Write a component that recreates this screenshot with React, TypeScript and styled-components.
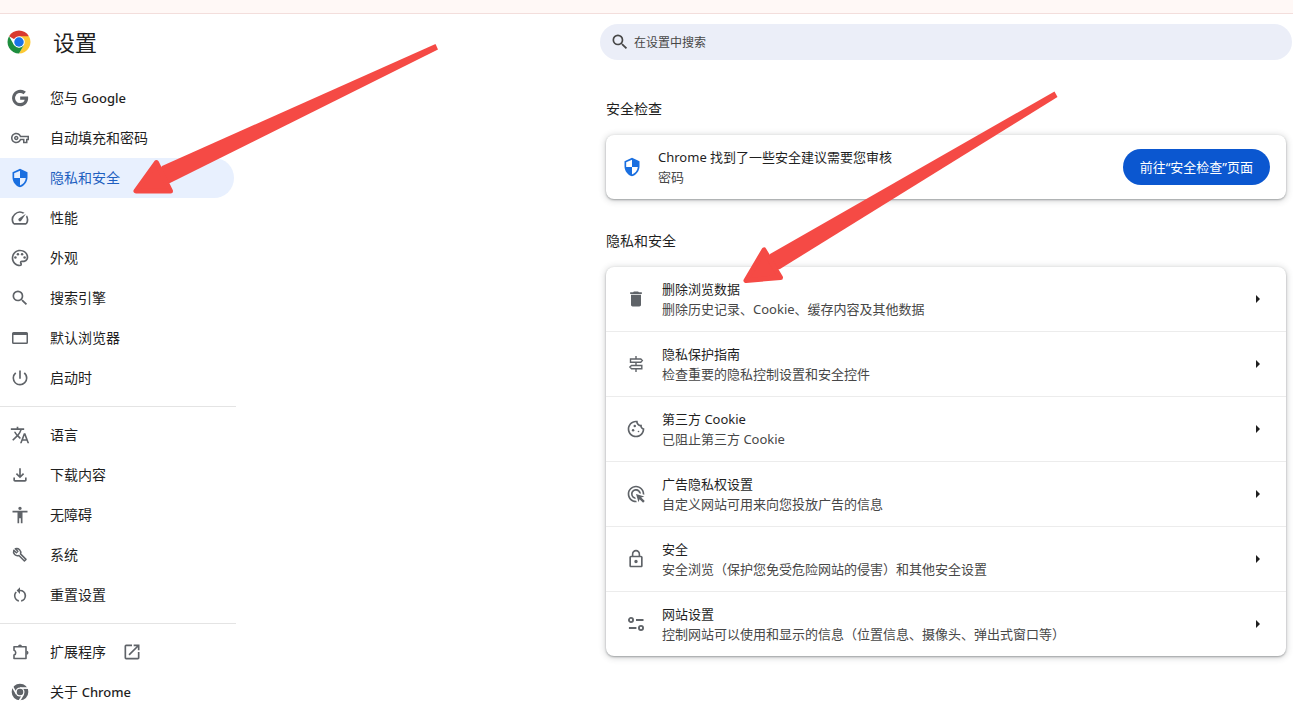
import React from "react";
import styled, { createGlobalStyle } from "styled-components";
import {
  MdOutlineVpnKey,
  MdOutlineSpeed,
  MdOutlinePalette,
  MdSearch,
  MdPowerSettingsNew,
  MdTranslate,
  MdOutlineFileDownload,
  MdAccessibility,
  MdOpenInNew,
  MdOutlineCookie,
  MdAdsClick,
  MdLockOutline,
  MdDelete,
} from "react-icons/md";

const GlobalStyle = createGlobalStyle`
  *, *::before, *::after { box-sizing: border-box; }
  body {
    margin: 0;
    background: #fff;
    color: #1f1f1f;
    font-family: "Noto Sans", "Noto Sans CJK SC", sans-serif;
    font-size: 13px;
    line-height: 20px;
  }
  h1, h2, p, ul { margin: 0; padding: 0; }
  ul { list-style: none; }
`;

const Page = styled.div`
  position: relative;
  overflow-x: hidden;
`;

const TopStrip = styled.div`
  height: 14px;
  background: #fff8f6;
  border-bottom: 1px solid #f3dedc;
`;

const Layout = styled.div`
  display: grid;
  grid-template-columns: 236px minmax(0, 1fr);
`;

const Sidebar = styled.aside`
  min-width: 0;
`;

const Brand = styled.header`
  display: flex;
  align-items: center;
  gap: 22px;
  height: 64px;
  padding: 0 0 8px 7px;
`;

const Title = styled.h1`
  font-size: 22px;
  font-weight: 400;
  line-height: 32px;
`;

const NavGroup = styled.ul`
  & + & {
    margin-top: 8px;
    padding-top: 8px;
    border-top: 1px solid #e4e4e4;
  }
`;

const NavLink = styled.a<{ $active?: boolean }>`
  display: flex;
  align-items: center;
  gap: 20px;
  height: 40px;
  margin-right: 2px;
  padding-left: 10px;
  border-radius: 0 20px 20px 0;
  background: ${(p) => (p.$active ? "#e8f0fe" : "transparent")};
  color: ${(p) => (p.$active ? "#1f5fc0" : "#1f1f1f")};
  font-size: 14px;
  text-decoration: none;

  svg {
    flex: none;
    color: ${(p) => (p.$active ? "#1a6fe0" : "#5f6368")};
  }
`;

const IconSlot = styled.span`
  display: flex;
  flex: none;
  align-items: center;
  justify-content: center;
  width: 20px;
  height: 20px;
`;

const ExternalLabel = styled.span`
  display: flex;
  align-items: center;
  gap: 16px;
`;

const Latin = styled.span`
  font-size: 13px;
  font-weight: 500;
`;

const Main = styled.main`
  display: flex;
  flex-direction: column;
  justify-self: end;
  width: 100%;
  max-width: 693px;
  padding: 10px 1px 0 0;
`;

const SearchBox = styled.label`
  display: flex;
  align-items: center;
  gap: 2px;
  height: 36px;
  padding: 0 10px;
  border-radius: 18px;
  background: #ebeef8;
  color: #474747;
`;

const SearchInput = styled.input`
  flex: 1;
  min-width: 0;
  padding: 2px 2px 0;
  border: 0;
  outline: 0;
  background: transparent;
  font: inherit;
  font-size: 12px;
  color: #474747;

  &::placeholder { color: #474747; opacity: 1; }
`;

const Section = styled.section`
  padding: 0 6px;
`;

const SectionTitle = styled.h2`
  padding: 39px 0 16px;
  font-size: 14px;
  font-weight: 400;
  line-height: 20px;
`;

const PrivacyTitle = styled(SectionTitle)`
  padding-top: 32px;
`;

const Card = styled.div`
  border-radius: 8px;
  background: #fff;
  box-shadow: 0 1px 2px rgba(60, 64, 67, 0.4), 0 1px 6px 1px rgba(60, 64, 67, 0.22);
`;

const CheckCard = styled(Card)`
  display: flex;
  align-items: center;
  gap: 16px;
  height: 64px;
  padding: 0 16px;
`;

const Texts = styled.span`
  display: flex;
  flex: 1;
  flex-direction: column;
  min-width: 0;
`;

const Primary = styled.span`
  color: #1f1f1f;
`;

const Secondary = styled.span`
  color: #474747;
`;

const ActionButton = styled.button`
  height: 36px;
  padding: 0 17px;
  border: 0;
  border-radius: 18px;
  background: #0b57d0;
  color: #fff;
  font: inherit;
  white-space: nowrap;
`;

const RowButton = styled.button`
  display: flex;
  align-items: center;
  gap: 16px;
  width: 100%;
  height: 64px;
  padding: 0 26px 0 20px;
  border: 0;
  background: transparent;
  font: inherit;
  text-align: left;

  svg { flex: none; color: #5f6368; }
`;

const Row = styled.li`
  & + & { border-top: 1px solid #ececec; }
`;

const Caret = styled.span`
  border: 4px solid transparent;
  border-right-width: 0;
  border-left-color: #1f1f1f;
`;

const ShieldBadge = styled(IconSlot)`
  color: #1a6fe0;
`;

const Arrow = styled.svg<{ $side: "left" | "right" }>`
  position: absolute;
  top: 0;
  ${(p) => p.$side}: 0;
  pointer-events: none;
  fill: #f54a45;
`;

const Icon = ({ children, size = 20, box = 24 }: { children: React.ReactNode; size?: number; box?: number }) => (
  <svg width={size} height={size} viewBox={`0 0 ${box} ${box}`} fill="currentColor" aria-hidden="true">
    {children}
  </svg>
);

const ChromeLogo = () => (
  <svg width="24" height="24" viewBox="0 0 48 48" aria-hidden="true">
    <path fill="#d93a2f" d="M24 24 4.100 12.500A23 23 0 0 1 43.900 12.500Z" />
    <path fill="#fcc934" d="M24 12.500h19.900A23 23 0 0 1 24 47L34 29.800Z" />
    <path fill="#1e8e3e" d="M4.100 12.500A23 23 0 0 0 24 47l10-17.200L24 35 14 29.800Z" />
    <circle cx="24" cy="24" r="11.500" fill="#fff" />
    <circle cx="24" cy="24" r="9.500" fill="#1a73e8" />
  </svg>
);

const ChromeMono = () => (
  <Icon>
    <circle cx="12" cy="12" r="10" />
    <g stroke="#fff" strokeWidth="2">
      <path d="M12 7.300h10.500" />
      <path d="M12 7.300h10.500" transform="rotate(120 12 12)" />
      <path d="M12 7.300h10.500" transform="rotate(240 12 12)" />
    </g>
    <circle cx="12" cy="12" r="5.400" fill="#fff" />
    <circle cx="12" cy="12" r="3.900" />
  </Icon>
);

const GoogleG = () => (
  <Icon>
    <path d="M21.600 10.300H12.200v3.900h5.400c-.5 2.500-2.600 3.900-5.400 3.900a6.100 6.100 0 1 1 4-10.700l2.900-2.900A10 10 0 1 0 12.200 22c5 0 9.600-3.600 9.600-10 0-.6-.1-1.200-.2-1.700Z" />
  </Icon>
);

const Shield = () => (
  <Icon>
    <path
      fillRule="evenodd"
      d="M12 1 3 5v6c0 5.550 3.840 10.740 9 12 5.160-1.260 9-6.450 9-12V5l-9-4Zm0 2.200v8.800h7c-.530 4.120-3.280 7.790-7 8.940V12H5V6.300l7-3.100Z"
    />
  </Icon>
);

const BrowserWindow = () => (
  <Icon box={20}>
    <path
      fillRule="evenodd"
      d="M3.500 4h13A1.500 1.500 0 0 1 18 5.500v9a1.500 1.500 0 0 1-1.500 1.500h-13A1.500 1.500 0 0 1 2 14.500v-9A1.500 1.500 0 0 1 3.500 4Zm0 3v7.500h13V7Z"
    />
  </Icon>
);

const Wrench = () => (
  <Icon box={20}>
    <path
      d="M3.800 5.300 6.400 7.800 7.900 6.300 5.300 3.800A4 4 0 0 1 10.500 8.900L16 14.400 14.400 16 8.900 10.500A4 4 0 0 1 3.800 5.300Z"
      fill="none"
      stroke="currentColor"
      strokeWidth="1.500"
      strokeLinejoin="round"
    />
  </Icon>
);

const Puzzle = () => (
  <Icon box={20}>
    <path
      d="M4 4.800h12v11.700H4v-3.400c2.300-.7 2.300-4.200 0-4.900Z"
      fill="none"
      stroke="currentColor"
      strokeWidth="1.600"
      strokeLinejoin="round"
    />
    <path d="M8 4.500a2 2 0 0 1 4 0ZM16.500 8.700a2 2 0 0 1 0 4Z" />
  </Icon>
);

const Reset = () => (
  <Icon size={18}>
    <path d="M12 5V1.500L7.500 6 12 10.500V7a6 6 0 0 1 1.500 11.800v2.100A8 8 0 0 0 12 5ZM6 13c0-1.650.67-3.150 1.760-4.240L6.340 7.340A8 8 0 0 0 10.500 20.900v-2.100A6 6 0 0 1 6 13Z" />
  </Icon>
);

const Signpost = () => (
  <Icon box={20}>
    <g fill="none" stroke="currentColor" strokeWidth="1.400">
      <path d="M4.500 5h10.300l1.500 1.600-1.500 1.600H4.500ZM15.800 11.500H5.500L3.900 13.100l1.600 1.600h10.300Z" />
      <path d="M10 2v3M10 8.200v3.300M10 14.700V18" />
    </g>
  </Icon>
);

const SiteSettings = () => (
  <Icon>
    <g fill="none" stroke="currentColor" strokeWidth="2.200">
      <circle cx="6" cy="7.200" r="2.500" />
      <circle cx="18" cy="16.800" r="2.500" />
      <path d="M12 7.200h9M3.500 16.800h9" />
    </g>
  </Icon>
);

type NavItem = { icon: React.ReactNode; label: React.ReactNode; active?: boolean; external?: boolean };

const navGroups: NavItem[][] = [
  [
    { icon: <GoogleG />, label: <>您与 <Latin>Google</Latin></> },
    { icon: <MdOutlineVpnKey size={18} />, label: "自动填充和密码" },
    { icon: <Shield />, label: "隐私和安全", active: true },
    { icon: <MdOutlineSpeed size={20} />, label: "性能" },
    { icon: <MdOutlinePalette size={20} />, label: "外观" },
    { icon: <MdSearch size={20} />, label: "搜索引擎" },
    { icon: <BrowserWindow />, label: "默认浏览器" },
    { icon: <MdPowerSettingsNew size={20} />, label: "启动时" },
  ],
  [
    { icon: <MdTranslate size={20} />, label: "语言" },
    { icon: <MdOutlineFileDownload size={20} />, label: "下载内容" },
    { icon: <MdAccessibility size={20} />, label: "无障碍" },
    { icon: <Wrench />, label: "系统" },
    { icon: <Reset />, label: "重置设置" },
  ],
  [
    { icon: <Puzzle />, label: "扩展程序", external: true },
    { icon: <ChromeMono />, label: <>关于 <Latin>Chrome</Latin></> },
  ],
];

const rows = [
  { icon: <MdDelete size={20} />, title: "删除浏览数据", detail: "删除历史记录、Cookie、缓存内容及其他数据" },
  { icon: <Signpost />, title: "隐私保护指南", detail: "检查重要的隐私控制设置和安全控件" },
  { icon: <MdOutlineCookie size={20} />, title: "第三方 Cookie", detail: "已阻止第三方 Cookie" },
  { icon: <MdAdsClick size={20} />, title: "广告隐私权设置", detail: "自定义网站可用来向您投放广告的信息" },
  { icon: <MdLockOutline size={20} />, title: "安全", detail: "安全浏览（保护您免受危险网站的侵害）和其他安全设置" },
  { icon: <SiteSettings />, title: "网站设置", detail: "控制网站可以使用和显示的信息（位置信息、摄像头、弹出式窗口等）" },
];

export default function App() {
  return (
    <>
      <GlobalStyle />
      <Page lang="zh-CN">
        <TopStrip />
        <Layout>
          <Sidebar>
            <Brand>
              <ChromeLogo />
              <Title>设置</Title>
            </Brand>
            <nav aria-label="设置">
              {navGroups.map((group, g) => (
                <NavGroup key={g}>
                  {group.map((item, i) => (
                    <li key={i}>
                      <NavLink href="#" $active={item.active} aria-current={item.active ? "page" : undefined}>
                        <IconSlot>{item.icon}</IconSlot>
                        {item.external ? (
                          <ExternalLabel>
                            {item.label}
                            <MdOpenInNew size={20} aria-hidden="true" />
                          </ExternalLabel>
                        ) : (
                          <span>{item.label}</span>
                        )}
                      </NavLink>
                    </li>
                  ))}
                </NavGroup>
              ))}
            </nav>
          </Sidebar>
          <Main>
            <SearchBox>
              <MdSearch size={20} aria-hidden="true" />
              <SearchInput type="search" placeholder="在设置中搜索" aria-label="在设置中搜索" />
            </SearchBox>
            <Section>
              <SectionTitle>安全检查</SectionTitle>
              <CheckCard>
                <ShieldBadge>
                  <Shield />
                </ShieldBadge>
                <Texts>
                  <Primary>Chrome 找到了一些安全建议需要您审核</Primary>
                  <Secondary>密码</Secondary>
                </Texts>
                <ActionButton type="button">前往“安全检查”页面</ActionButton>
              </CheckCard>
            </Section>
            <Section>
              <PrivacyTitle>隐私和安全</PrivacyTitle>
              <Card as="ul">
                {rows.map((row) => (
                  <Row key={row.title}>
                    <RowButton type="button">
                      {row.icon}
                      <Texts>
                        <Primary>{row.title}</Primary>
                        <Secondary>{row.detail}</Secondary>
                      </Texts>
                      <Caret />
                    </RowButton>
                  </Row>
                ))}
              </Card>
            </Section>
          </Main>
        </Layout>
        <Arrow $side="left" width="450" height="210" viewBox="0 0 450 210" aria-hidden="true">
          <path d="M435.500 44 438 49.500 170 183 150 186 162 166Z" />
          <path d="M156.500 162.500 136 191 170.500 191Z" stroke="#f54a45" strokeWidth="5" strokeLinejoin="round" />
        </Arrow>
        <Arrow $side="right" width="560" height="300" viewBox="733 0 560 300" aria-hidden="true">
          <path d="M1054.500 91.500 1057.500 97 780 269 760 274 770 254Z" />
          <path d="M764 250 746 280.500 780.500 277.500Z" stroke="#f54a45" strokeWidth="5" strokeLinejoin="round" />
        </Arrow>
      </Page>
    </>
  );
}
